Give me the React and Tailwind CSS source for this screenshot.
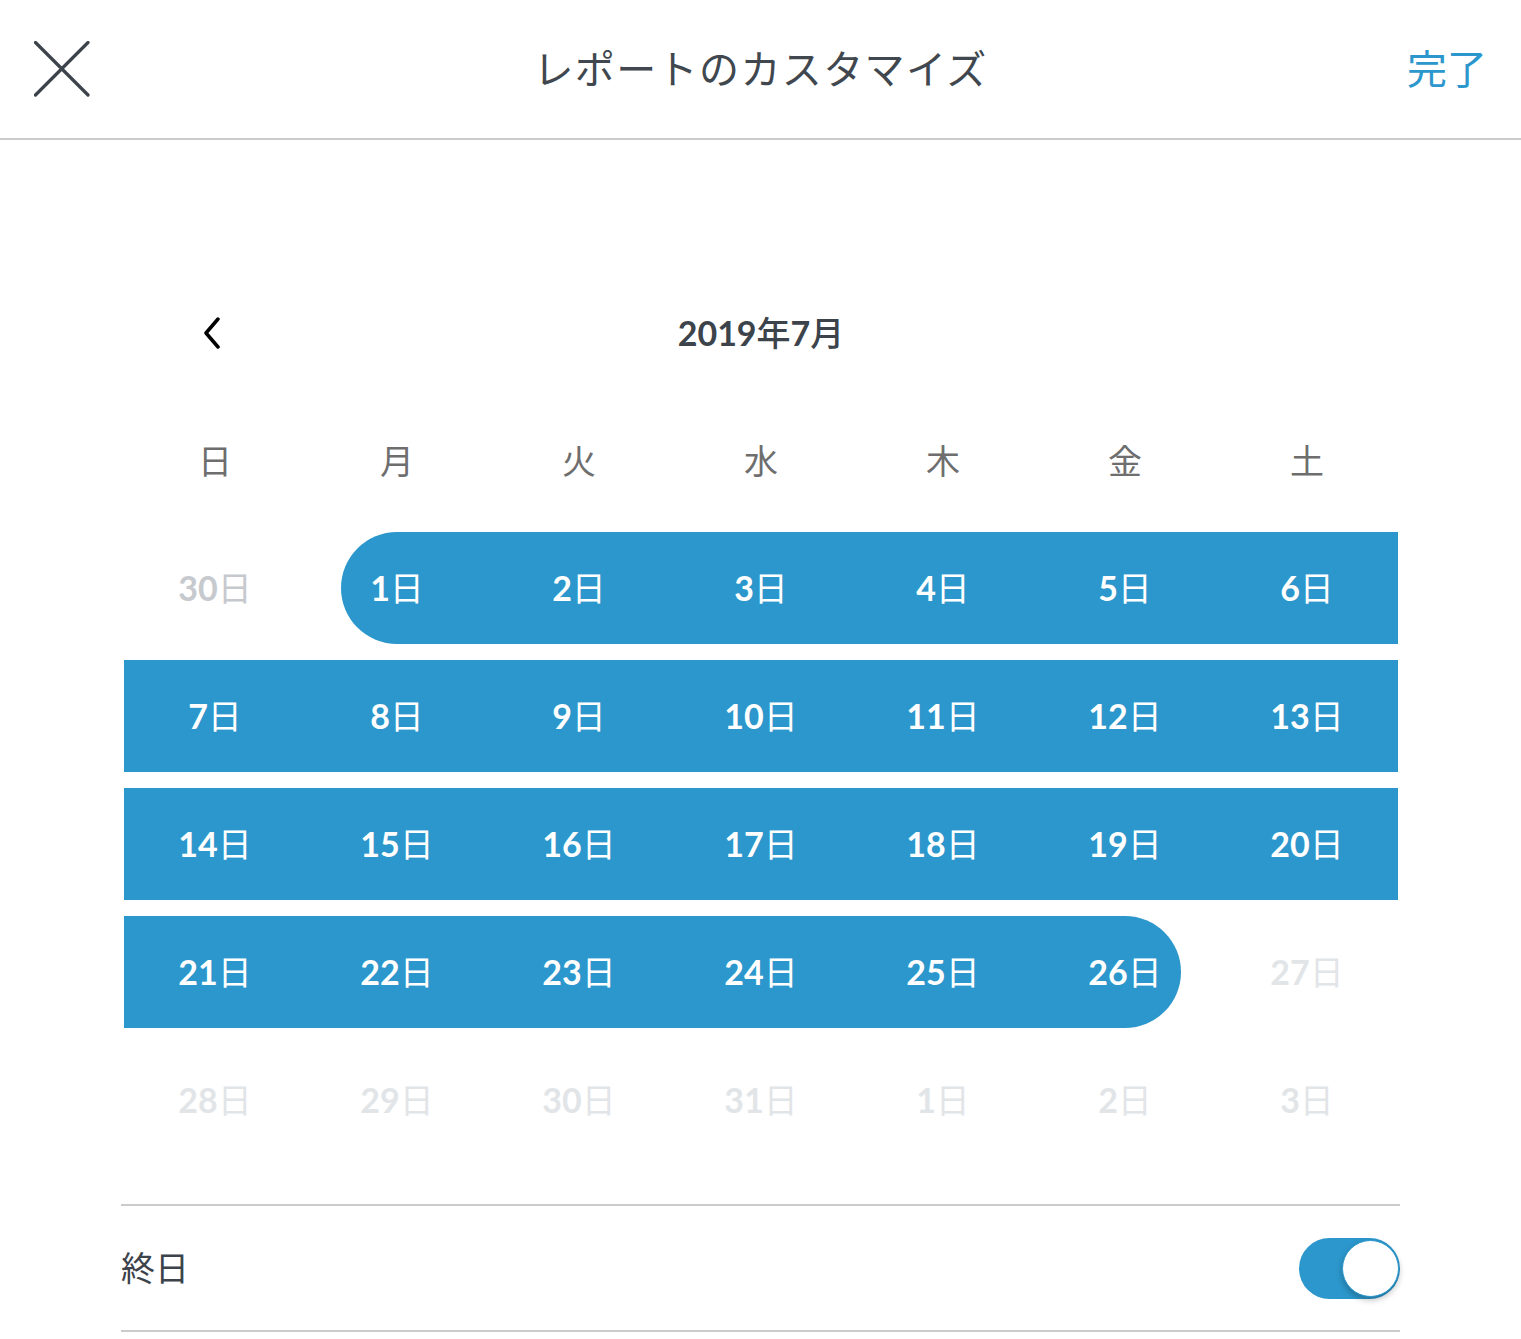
import React, { useState } from "react";

// Calendar data for July 2019.
const weekdays = ["日", "月", "火", "水", "木", "金", "土"];

const weeks = [
    [
        { n: 30, muted: "dark" },
        { n: 1, sel: "start" },
        { n: 2, sel: "mid" },
        { n: 3, sel: "mid" },
        { n: 4, sel: "mid" },
        { n: 5, sel: "mid" },
        { n: 6, sel: "mid" },
    ],
    [7, 8, 9, 10, 11, 12, 13].map((n) => ({ n, sel: "mid" })),
    [14, 15, 16, 17, 18, 19, 20].map((n) => ({ n, sel: "mid" })),
    [
        { n: 21, sel: "mid" },
        { n: 22, sel: "mid" },
        { n: 23, sel: "mid" },
        { n: 24, sel: "mid" },
        { n: 25, sel: "mid" },
        { n: 26, sel: "end" },
        { n: 27, muted: "light" },
    ],
    [28, 29, 30, 31, 1, 2, 3].map((n) => ({ n, muted: "light" })),
];

function DayLabel({ n, className }) {
    return (
        <span className={"text-[34px] leading-none " + className}>
            <span className="font-bold">{n}</span>
            <span className="font-normal">日</span>
        </span>
    );
}

function DayCell({ day }) {
    // Start / end of the range: half bar + circle.
    if (day.sel === "start" || day.sel === "end") {
        const half =
            day.sel === "start"
                ? "bg-[linear-gradient(to_right,transparent_50%,#2c97cc_50%)]"
                : "bg-[linear-gradient(to_right,#2c97cc_50%,transparent_50%)]";
        return (
            <div className={"flex h-[112px] items-center justify-center " + half}>
                <div className="flex h-[112px] w-[112px] items-center justify-center rounded-full bg-[#2c97cc]">
                    <DayLabel n={day.n} className="whitespace-nowrap text-white" />
                </div>
            </div>
        );
    }
    if (day.sel === "mid") {
        return (
            <div className="flex h-[112px] items-center justify-center bg-[#2c97cc]">
                <DayLabel n={day.n} className="text-white" />
            </div>
        );
    }
    return (
        <div className="flex h-[112px] items-center justify-center">
            <DayLabel
                n={day.n}
                className={day.muted === "dark" ? "text-[#c6c9cd]" : "text-[#e2e5e8]"}
            />
        </div>
    );
}

export default function App() {
    const [allDay, setAllDay] = useState(true);

    return (
        <div className="min-h-[1339px] w-full bg-white font-[Lato,'Noto_Sans_CJK_JP',sans-serif] text-[#3c434a]">
            {/* Header */}
            <div className="grid h-[140px] grid-cols-[1fr_auto_1fr] items-center border-b-2 border-[#cbcbcb] pl-[34px] pr-[34px]">
                <button className="flex h-[56px] w-[56px] items-center justify-start">
                    <svg width="56" height="56" viewBox="0 0 56 56" fill="none">
                        <path
                            d="M1.5 1.5L54 54M54 1.5L1.5 54"
                            stroke="#3c434a"
                            strokeWidth="3.2"
                            strokeLinecap="round"
                        />
                    </svg>
                </button>
                <p className="text-[40px] leading-none font-normal tracking-[1.4px] text-[#40474e]">レポートのカスタマイズ</p>
                <p className="justify-self-end text-[40px] leading-none text-[#2c97cc]">完了</p>
            </div>

            {/* Calendar */}
            <div className="pl-[124px] pr-[123px]">
                <div className="mt-[150px] grid h-[86px] grid-cols-[182px_1fr_182px] items-center">
                    <div className="flex justify-center pr-[6px]">
                        <svg width="20" height="32" viewBox="0 0 20 32" fill="none">
                            <path
                                d="M16 2L4 16L16 30"
                                stroke="#000"
                                strokeWidth="3.5"
                                strokeLinecap="round"
                                strokeLinejoin="round"
                            />
                        </svg>
                    </div>
                    <p className="text-center text-[34px] leading-none">
                        <span className="font-bold">2019</span>
                        <span className="font-medium">年</span>
                        <span className="font-bold">7</span>
                        <span className="font-medium">月</span>
                    </p>
                    <div />
                </div>

                <div className="mt-[50px] grid h-[70px] grid-cols-7 items-center">
                    {weekdays.map((w, index) => (
                        <p key={index} className="text-center text-[34px] leading-none text-[#6e6e6e]">
                            {w}
                        </p>
                    ))}
                </div>

                <div className="mt-[36px] flex flex-col gap-[16px]">
                    {weeks.map((week, wi) => (
                        <div key={wi} className="grid grid-cols-7">
                            {week.map((day, di) => (
                                <DayCell key={di} day={day} />
                            ))}
                        </div>
                    ))}
                </div>
            </div>

            {/* All-day toggle */}
            <div className="mt-[48px] px-[121px]">
                <div className="flex h-[128px] items-center justify-between border-t-2 border-b-2 border-[#cbcbcb]">
                    <p className="text-[34px] leading-none">終日</p>
                    <button
                        onClick={() => setAllDay(!allDay)}
                        className="flex h-[61px] w-[101px] items-center justify-end rounded-full bg-[#2c97cc] pr-[1px]"
                    >
                        <span className="h-[57px] w-[57px] rounded-full border border-[#2c97cc] bg-white shadow-[0_3px_6px_rgba(0,0,0,0.25)]" />
                    </button>
                </div>
            </div>
        </div>
    );
}
